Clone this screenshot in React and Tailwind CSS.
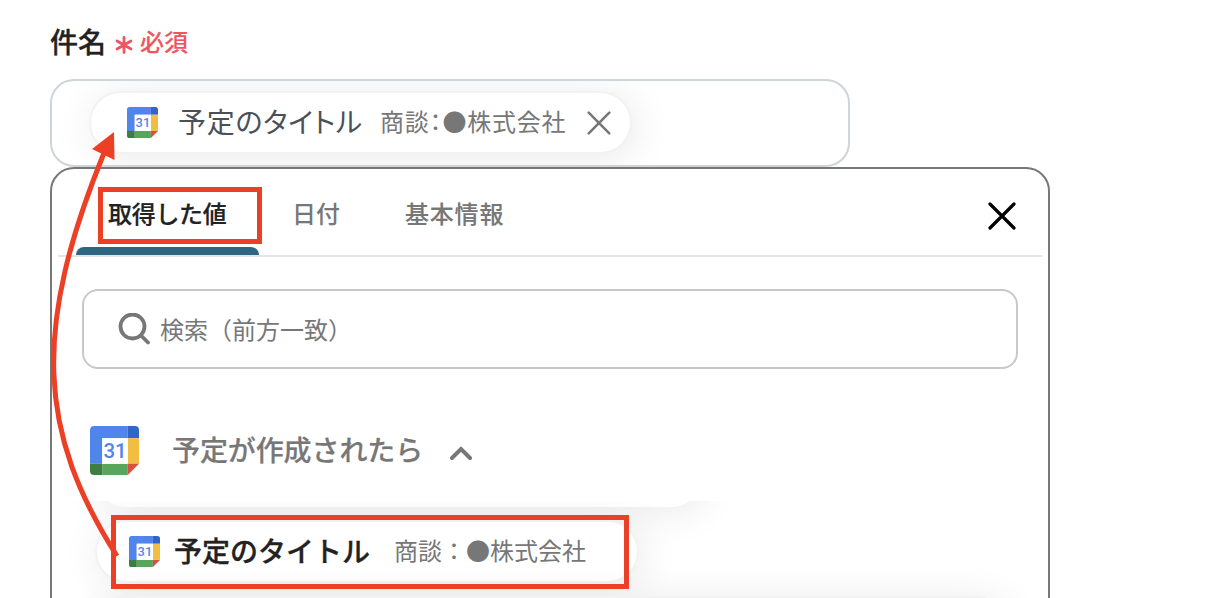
import React from 'react';

function CalendarIcon({ className }) {
  return (
    <svg viewBox="0 0 48 48" className={className}>
      <path d="M4 0H37V12H12V37H0V4Q0 0 4 0Z" fill="#5086ec" />
      <path d="M37 0H44Q48 0 48 4V12H37Z" fill="#3065ca" />
      <path d="M37 12H48V37H37Z" fill="#f1be42" />
      <path d="M12 37H37V48H12Z" fill="#58a55c" />
      <path d="M0 37H12V48H4Q0 48 0 44Z" fill="#3b7e40" />
      <path d="M12 12H37V37H12Z" fill="#fff" />
      <path d="M37 37H48L37 48Z" fill="#d85140" />
      <text x="24.6" y="31.5" textAnchor="middle" fontFamily="Roboto, sans-serif" fontWeight="500" fontSize="20" fill="#5086ec">
        31
      </text>
    </svg>
  );
}

function CloseIcon({ className, strokeWidth }) {
  return (
    <svg viewBox="0 0 28 28" fill="none" stroke="currentColor" strokeWidth={strokeWidth} strokeLinecap="round" className={className}>
      <path d="M2 2L26 26M26 2L2 26" />
    </svg>
  );
}

function Field() {
  return (
    <div className="box-border flex h-[88px] w-[800px] overflow-hidden rounded-[24px] border-2 border-[#cfd4d9] pt-[10px] pl-[37px]">
      <div className="flex h-[63px] w-[543px] items-center rounded-full border-2 border-[#f2f2f2] bg-white bg-clip-padding pl-[36px] shadow-[4px_4px_40px_rgba(0,0,0,0.09)]">
        <CalendarIcon className="size-[31px] shrink-0" />
        <span className="mb-[4px] ml-[20px] w-[202px] shrink-0 text-[28px] tracking-[0.7px] whitespace-nowrap text-[#4b5058] [font-feature-settings:'palt']">予定のタイトル</span>
        <span className="mb-[4px] w-[207px] shrink-0 text-[24px] tracking-[0.8px] whitespace-nowrap text-[#777] [font-feature-settings:'palt']">商談：●株式会社</span>
        <CloseIcon strokeWidth="3" className="size-[24px] shrink-0 text-[#777]" />
      </div>
    </div>
  );
}

function Tabs() {
  return (
    <div className="mx-[6px] flex h-[88px] border-b-2 border-[#e5e5e5]">
      <div className="ml-[18px] flex w-[183px] flex-col justify-between">
        <span className="pt-[26px] pl-[32px] text-[24px] leading-[36px] font-medium tracking-[-0.3px] whitespace-nowrap text-[#222] [-webkit-text-stroke:0.2px]">取得した値</span>
        <div className="h-[8px] rounded-t-[8px] bg-[#2f6680]" />
      </div>
      <span className="mt-[26px] ml-[33px] w-[113px] text-[24px] leading-[36px] font-medium text-[#777]">日付</span>
      <span className="mt-[26px] text-[24px] leading-[36px] font-medium tracking-[0.8px] text-[#777] [-webkit-text-stroke:0.1px]">基本情報</span>
      <CloseIcon strokeWidth="3.2" className="mt-[33px] mr-[26px] ml-auto size-[28px] text-black" />
    </div>
  );
}

function Panel() {
  return (
    <div className="flex h-[460px] w-[1000px] flex-col rounded-t-[24px] border-2 border-[#777]">
      <Tabs />
      <div className="mx-[30px] mt-[32px] flex h-[80px] shrink-0 items-center rounded-[16px] border-2 border-[#c8c8c8] pl-[34px]">
        <svg viewBox="0 0 32 32" fill="none" stroke="#777" strokeWidth="3.8" strokeLinecap="round" className="size-[32px]">
          <circle cx="14.5" cy="13.5" r="12" />
          <path d="M23 22.500L30 29.500" />
        </svg>
        <span className="ml-[10px] text-[24px] text-[#777]">検索（前方一致）</span>
      </div>
      <div className="flex h-[132px] shrink-0 items-center pt-[32px] pl-[38px]">
        <CalendarIcon className="mb-[1px] size-[49px]" />
        <span className="mb-[4px] ml-[33px] text-[28px] font-medium tracking-[-0.1px] text-[#777] [-webkit-text-stroke:0.2px]">予定が作成されたら</span>
        <svg viewBox="0 0 22 14" fill="none" stroke="#777" strokeWidth="4" strokeLinecap="round" className="mt-[3px] ml-[27px] h-[14px] w-[22px]">
          <path d="M2 12L11 3L20 12" />
        </svg>
      </div>
      <div className="flex h-[97px] shrink-0 flex-col gap-[13px] overflow-hidden pl-[43px]">
        <div className="-mt-[56px] h-[62px] w-[607px] shrink-0 rounded-full bg-white shadow-[4px_4px_40px_rgba(0,0,0,0.09)]" />
        <div className="flex h-[63px] w-[544px] shrink-0 items-center rounded-full border-2 border-[#f2f2f2] bg-white pl-[32px] shadow-[4px_4px_40px_rgba(0,0,0,0.09)]">
          <CalendarIcon className="mb-[1px] size-[31px] shrink-0" />
          <span className="mb-[4px] ml-[14px] w-[220px] shrink-0 text-[28px] font-medium whitespace-nowrap text-[#222] [-webkit-text-stroke:0.3px]">予定のタイトル</span>
          <span className="mb-[4px] text-[24px] whitespace-nowrap text-[#777]">商談：●株式会社</span>
        </div>
        <div className="h-[62px] w-[912px] shrink-0 rounded-full border-2 border-[#f2f2f2] bg-white shadow-[4px_4px_40px_rgba(0,0,0,0.09)]" />
      </div>
    </div>
  );
}

export default function App() {
  return (
    <div className="relative h-[598px] w-[1218px] overflow-hidden bg-white pl-[50px] font-['Noto_Sans_CJK_JP',sans-serif]">
      <div className="flex h-[79px] items-center pt-[2px]">
        <span className="text-[28px] font-medium text-[#222] [-webkit-text-stroke:0.3px]">件名</span>
        <svg viewBox="0 0 18 18" stroke="#ee5560" strokeWidth="2.800" strokeLinecap="round" className="mt-[8px] ml-[9px] size-[18px]">
          <path d="M9 1.500V16.500M2 5L16 13M16 5L2 13" />
        </svg>
        <span className="mt-[1px] ml-[7px] text-[24px] font-medium text-[#ee5560] [-webkit-text-stroke:0.1px]">必須</span>
      </div>
      <Field />
      <Panel />

      {/* highlights and arrow drawn over the form */}
      <div className="absolute top-[187px] left-[98px] h-[57px] w-[164px] border-5 border-[#eb4026]" />
      <div className="absolute top-[515px] left-[111px] h-[74px] w-[518px] border-5 border-[#eb4026]" />
      <svg viewBox="0 0 1218 598" fill="none" className="absolute top-0 left-0 h-[598px] w-[1218px]">
        <path d="M117 556C38 432 32 330 104 153" stroke="#eb4026" strokeWidth="5" />
        <path d="M114 132L92 149L114.500 160Z" fill="#eb4026" />
      </svg>
    </div>
  );
}
